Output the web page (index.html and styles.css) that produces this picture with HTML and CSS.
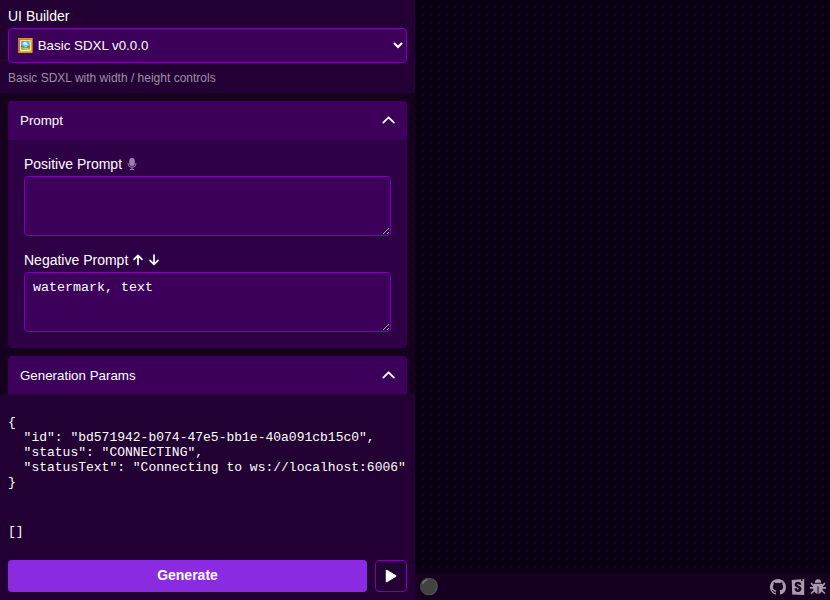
FILE: index.html
```html
<!DOCTYPE html>
<html lang="en">
<head>
<meta charset="utf-8">
<title>UI Builder</title>
<link rel="stylesheet" href="styles.css">
</head>
<body>
<div class="app">
  <aside class="sidebar">
    <header class="builder">
      <label class="label" for="ui">UI Builder</label>
      <select class="select" id="ui"><option>🖼️ Basic SDXL v0.0.0</option></select>
      <p class="description">Basic SDXL with width / height controls</p>
    </header>
    <main class="panels">
      <section class="card">
        <div class="card-head"><span>Prompt</span><svg class="chevron" viewBox="0 0 14 14"><path d="M2.300 8.600 7.600 3.300l5.300 5.300"/></svg></div>
        <div class="card-body">
          <div class="field">
            <div class="label">Positive Prompt <svg class="mic" viewBox="0 0 10 14"><rect x="2.700" y="1.200" width="4.600" height="7.600" rx="2.300"/><path d="M1.100 6v.9a3.900 3.500 0 0 0 7.800 0V6M5 10.400v2M2.800 12.500h4.400"/></svg></div>
            <textarea class="textarea"></textarea>
          </div>
          <div class="field">
            <div class="label">Negative Prompt <svg class="arrow" viewBox="0 0 12 12"><path d="M6 10.500V1.500M2 5.300l4-4 4 4"/></svg><svg class="arrow" viewBox="0 0 12 12"><path d="M6 1v9M2 6.300l4 4 4-4"/></svg></div>
            <textarea class="textarea">watermark, text</textarea>
          </div>
        </div>
      </section>
      <section class="card">
        <div class="card-head"><span>Generation Params</span><svg class="chevron" viewBox="0 0 14 14"><path d="M2.300 8.600 7.600 3.300l5.300 5.300"/></svg></div>
        <div class="card-body"></div>
      </section>
    </main>
    <footer class="status">
      <pre class="json">{
  "id": "bd571942-b074-47e5-bb1e-40a091cb15c0",
  "status": "CONNECTING",
  "statusText": "Connecting to ws://localhost:6006"
}

</pre>
      <pre class="queue">[]</pre>
      <div class="actions">
        <button class="generate">Generate</button>
        <button class="play" aria-label="Play"><svg viewBox="0 0 12 14"><path d="M1.500 1.500v11L10.700 7z"/></svg></button>
      </div>
    </footer>
  </aside>
  <div class="workspace">
    <div class="canvas"></div>
    <div class="statusbar">
      <span class="dot">⚫</span>
      <nav class="links">
        <svg viewBox="0 0 16 16"><path d="M8 0C3.580 0 0 3.580 0 8c0 3.540 2.290 6.530 5.470 7.590.4.070.55-.17.55-.38 0-.19-.01-.82-.01-1.490-2.010.37-2.530-.49-2.690-.94-.09-.23-.48-.94-.82-1.130-.28-.15-.68-.52-.01-.53.63-.01 1.080.58 1.230.82.72 1.210 1.870.87 2.330.66.070-.52.28-.87.51-1.070-1.780-.2-3.640-.89-3.640-3.950 0-.87.31-1.590.82-2.150-.08-.2-.36-1.020.08-2.120 0 0 .67-.21 2.200.82a7.600 7.600 0 0 1 4 0c1.530-1.040 2.200-.82 2.200-.82.44 1.100.16 1.920.08 2.120.51.56.82 1.270.82 2.150 0 3.070-1.870 3.750-3.650 3.950.29.25.54.73.54 1.480 0 1.070-.01 1.930-.01 2.200 0 .21.15.46.55.38A8 8 0 0 0 16 8c0-4.420-3.580-8-8-8z"/></svg>
        <svg viewBox="0 0 16 16"><path fill-rule="evenodd" d="M1.700 1 14.200 0v16L2.200 15.500zM11.200 5.800C11.200 3.700 10 2.700 8 2.700 6 2.700 4.700 3.800 4.700 5.500c0 2.900 4 2.800 4 4.200 0 .5-.2.8-.8.8-.7 0-.9-.4-.9-1.300H4.600c0 2.300 1.300 3.700 3.500 3.700 2 0 3.300-1.100 3.300-3.100 0-2.900-4.100-2.900-4.100-4.300 0-.5.3-.7.7-.7s.7.300.7 1zM11.100.3l-.1 2 .8-.6.7.6-.1-2.100z"/></svg>
        <svg viewBox="0 0 16 16"><path d="M4.800 3.800a3.200 3.500 0 0 1 6.400 0zM4.200 4.800h7.600l.6.700 2-2 1.200 1.200-2.600 2.600V8H16v1.800h-3.300q0 .7-.2 1.200l3 2.900-1.200 1.200-2.700-2.600Q10.400 14.500 8.500 15V7.500H7.500V15q-1.900-.5-3.100-2.500l-2.700 2.600-1.200-1.200 3-2.900q-.2-.5-.2-1.200H0V8h3V7.300L.4 4.700l1.200-1.200 2 2z"/></svg>
      </nav>
    </div>
  </div>
</div>
</body>
</html>
```
FILE: styles.css
```css
* { box-sizing: border-box; }
body {
  margin: 0;
  background: #080010;
  color: #fff;
  font: 14px/20px "Liberation Sans", Arial, sans-serif;
}
.app { display: flex; height: 100vh; overflow: hidden; }
.sidebar { display: flex; flex-direction: column; width: 415px; flex: none; background: #150020; }
.builder { height: 93px; flex: none; padding: 6px 8px 0; background: #220033; }
.label { display: flex; align-items: center; height: 20px; font-size: 14px; }
.select {
  display: block;
  width: 100%;
  height: 35px;
  margin-top: 2px;
  padding: 0 4px;
  border: 1px solid #7f00b2;
  border-radius: 4px;
  background: #3d005a;
  color: #fff;
  font: 13.333px "Liberation Sans", Arial, sans-serif;
}
.description { margin: 7px 0 0; font-size: 12px; line-height: 16px; color: #a08fa9; }
.panels { display: flex; flex-direction: column; gap: 8px; flex: 1; min-height: 0; padding: 8px 8px 0; overflow: hidden; }
.card { flex: none; border-radius: 4px; overflow: hidden; background: #2e0045; }
.card-head {
  display: flex;
  align-items: center;
  justify-content: space-between;
  height: 39px;
  padding: 0 12px;
  background: #3d005a;
  font-size: 13.333px;
}
.chevron { width: 14px; height: 14px; fill: none; stroke: #fff; stroke-width: 1.800; stroke-linecap: round; stroke-linejoin: round; }
.card-body { display: flex; flex-direction: column; gap: 14px; padding: 14px 16px 16px; min-height: 30px; }
.field { display: flex; flex-direction: column; gap: 2px; }
.mic { width: 10px; height: 14px; margin-left: 5px; fill: #9b80a8; stroke: #9b80a8; stroke-width: 1; }
.mic path { fill: none; }
.arrow { width: 12px; height: 12px; margin-left: 4px; fill: none; stroke: #fff; stroke-width: 1.700; stroke-linecap: round; stroke-linejoin: round; }
.textarea {
  display: block;
  width: 100%;
  height: 60px;
  padding: 7px 8px;
  border: 1px solid #7f00b2;
  border-radius: 4px;
  background: #3d005a;
  color: #fff;
  font: 13.333px/15px "Liberation Mono", monospace;
}
.status { height: 206px; flex: none; padding: 21px 8px 8px; background: #220033; display: flex; flex-direction: column; }
.json, .queue { margin: 0; font: 13px/15px "Liberation Mono", monospace; }
.queue { margin-top: 19px; }
.actions { display: flex; gap: 8px; margin-top: auto; }
.generate, .play { height: 32px; border-radius: 4px; color: #fff; }
.generate { flex: 1; border: 0; padding: 0 0 2px; background: #8a2be2; font: bold 14px "Liberation Sans", Arial, sans-serif; }
.play { display: grid; place-items: center; width: 32px; padding: 0; border: 1px solid #7f00b2; background: transparent; }
.play svg { width: 12px; height: 14px; fill: #fff; stroke: #fff; stroke-width: 1.500; stroke-linejoin: round; }
.workspace { display: flex; flex-direction: column; flex: 1; }
.canvas {
  flex: 1;
  background-image: radial-gradient(circle, #300048 0, #080010 1.900px);
  background-size: 8px 8px;
  background-position: 3.500px 2.500px;
}
.statusbar { display: flex; align-items: center; justify-content: space-between; height: 27px; padding: 0 4px; background: #150020; }
.dot { font-size: 16px; line-height: 20px; }
.links { display: flex; gap: 4px; }
.links svg { width: 16px; height: 16px; fill: #a99aae; }
```
